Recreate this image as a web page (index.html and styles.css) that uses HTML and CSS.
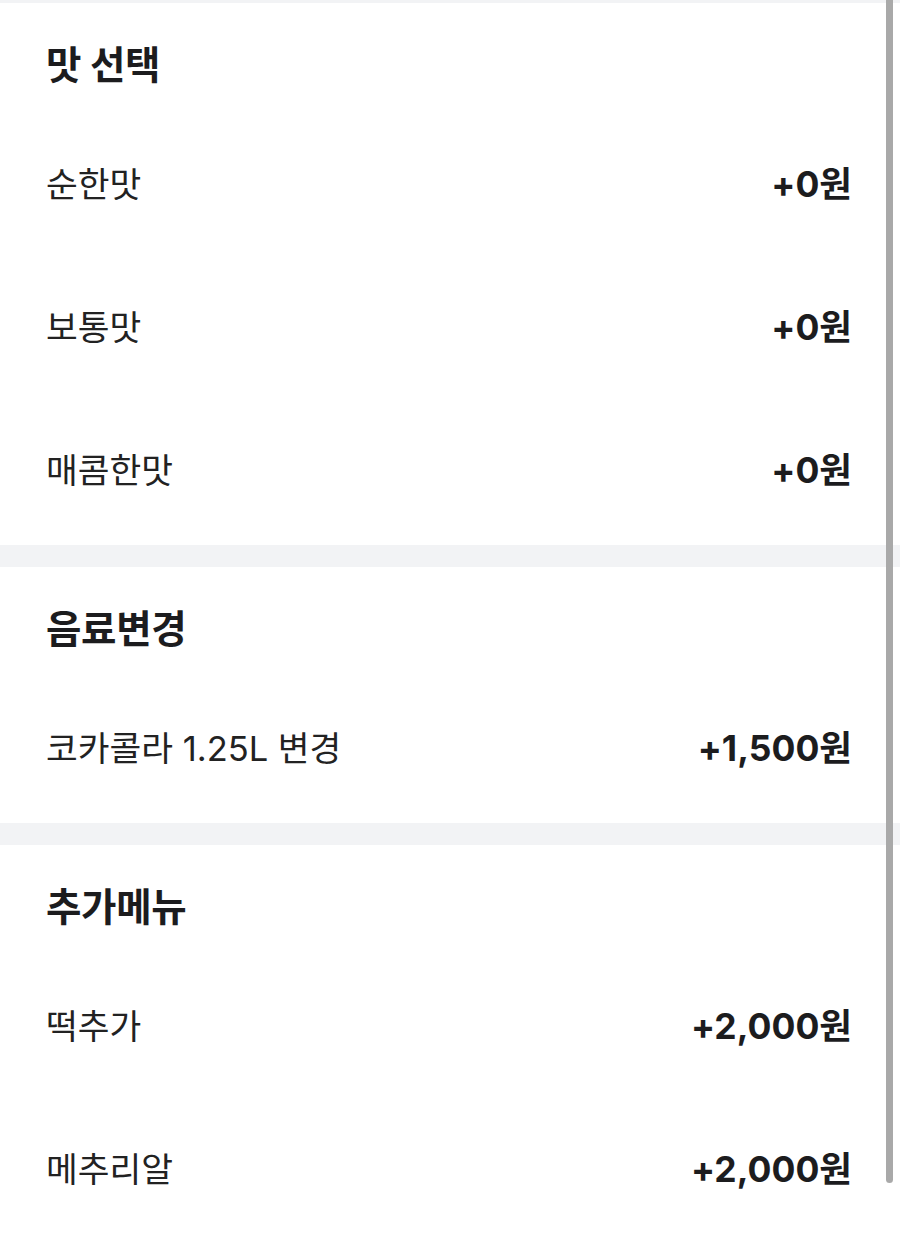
FILE: index.html
```html
<!DOCTYPE html>
<html lang="ko">
<head>
<meta charset="utf-8">
<title>옵션 선택</title>
<link rel="stylesheet" href="styles.css">
</head>
<body>
<div class="page">
  <section class="group">
    <h2 class="group-title">맛 선택</h2>
    <div class="option"><span class="option-name">순한맛</span><span class="option-price">+0원</span></div>
    <div class="option"><span class="option-name">보통맛</span><span class="option-price">+0원</span></div>
    <div class="option"><span class="option-name">매콤한맛</span><span class="option-price">+0원</span></div>
  </section>
  <section class="group">
    <h2 class="group-title">음료변경</h2>
    <div class="option"><span class="option-name">코카콜라 1.25L 변경</span><span class="option-price">+1,500원</span></div>
  </section>
  <section class="group">
    <h2 class="group-title">추가메뉴</h2>
    <div class="option"><span class="option-name">떡추가</span><span class="option-price">+2,000원</span></div>
    <div class="option"><span class="option-name">메추리알</span><span class="option-price">+2,000원</span></div>
  </section>
  <div class="scroll-thumb"></div>
</div>
</body>
</html>
```
FILE: styles.css
```css
* {
  box-sizing: border-box;
}

html, body {
  margin: 0;
  padding: 0;
  background: #ffffff;
}

body {
  font-family: "Inter", "Noto Sans CJK KR", sans-serif;
  color: #1c1c1e;
}

.page {
  position: relative;
  width: 900px;
  min-height: 1234px;
  padding-top: 3px;
  background: #f2f3f5;
  overflow: hidden;
}

.group {
  background: #ffffff;
  padding: 0 48px 3px 46px;
}

.group + .group {
  margin-top: 22px;
}

.group-title {
  margin: 0;
  padding: 42px 0 28px;
  font-size: 38.5px;
  line-height: 40px;
  font-weight: 700;
  letter-spacing: -0.3px;
}

.option {
  display: flex;
  align-items: center;
  justify-content: space-between;
  height: 143px;
  line-height: 42px;
}

.option-name {
  font-size: 34.5px;
  font-weight: 400;
  color: #222222;
}

.option-price {
  font-size: 35.5px;
  font-weight: 700;
  color: #1c1c1e;
}

/* overlay scrollbar thumb on the right edge */
.scroll-thumb {
  position: absolute;
  top: -10px;
  right: 7px;
  width: 7px;
  height: 1193px;
  border-radius: 4px;
  background: #a9a9a9;
}
```
